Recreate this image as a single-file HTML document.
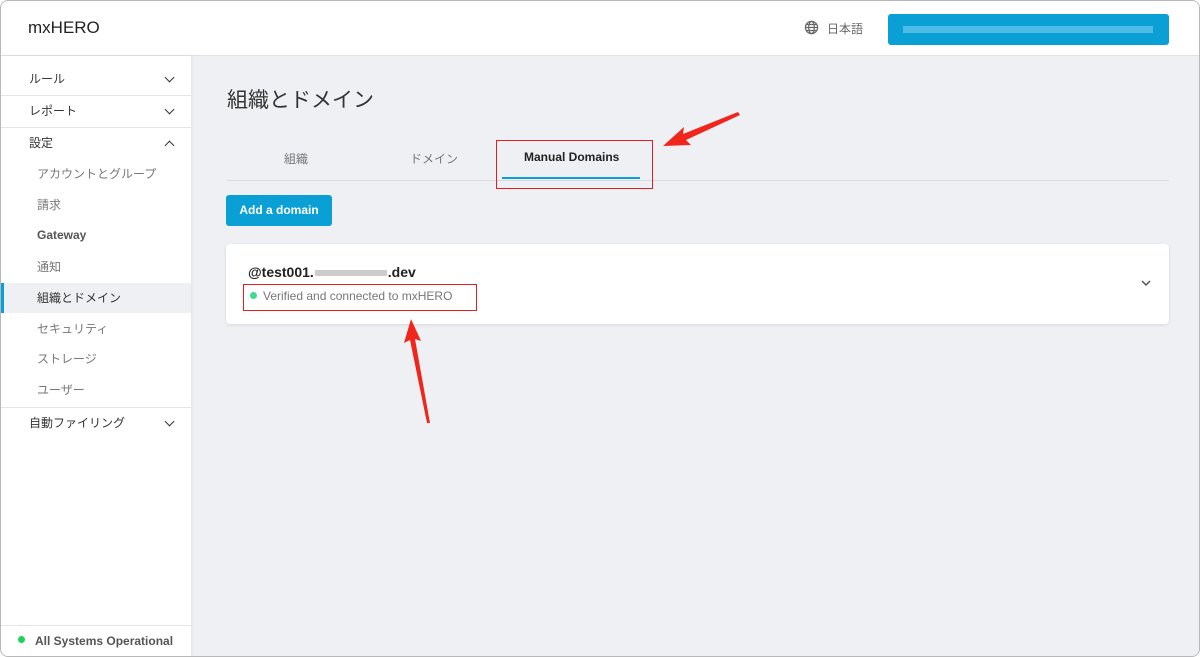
<!DOCTYPE html>
<html><head><meta charset="utf-8"><style>
*{box-sizing:border-box;margin:0;padding:0}
body{width:1200px;height:657px;overflow:hidden;background:#fff;font-family:"Liberation Sans","Noto Sans CJK JP",sans-serif;position:relative}
.frame{position:absolute;inset:0;border:1px solid #b8b8b8;border-radius:8px;overflow:hidden;background:#eef0f3}
.hdr{position:absolute;left:0;top:0;width:1200px;height:55px;background:#fff;border-bottom:1px solid #dfe1e4}
.logo{position:absolute;left:27px;top:17px;font-size:17px;color:#222}
.lang{position:absolute;left:803px;top:19px;font-size:12px;color:#666}
.btn-top{position:absolute;left:887px;top:13px;width:281px;height:31px;background:#0aa0d6;border-radius:3px}
.btn-top i{position:absolute;left:15px;top:12px;width:250px;height:7px;background:#5cc3ea;opacity:.8}
.side{position:absolute;left:0;top:55px;width:190px;height:602px;background:#fff;box-shadow:1px 0 3px rgba(0,0,0,.06)}
.sec{position:absolute;left:0;width:190px;height:32px;border-bottom:1px solid #e3e5e8;font-size:12px;color:#333;padding:9px 0 0 28px;line-height:12px}
.chev{position:absolute;right:18px;top:10px;width:7px;height:7px;border-right:1.6px solid #333;border-bottom:1.6px solid #333;transform:rotate(45deg)}
.chev.up{transform:rotate(-135deg);top:14px}
.item{position:absolute;left:36px;font-size:12px;color:#777}
.active{position:absolute;left:0;top:227px;width:190px;height:30px;background:#eef0f3;border-left:3px solid #0aa0d6}
.status{position:absolute;left:0;top:569px;width:190px;border-top:1px solid #e3e5e8;height:33px}
.status span{position:absolute;left:34px;top:8px;font-size:12px;font-weight:bold;color:#555}
.status b{position:absolute;left:17px;top:10px;width:7px;height:7px;border-radius:50%;background:#1dd35a}
h1{position:absolute;left:226px;top:83px;font-size:21px;font-weight:normal;color:#333}
.tabline{position:absolute;left:226px;top:179px;width:942px;height:1px;background:#d8dadd}
.tab{position:absolute;top:149px;font-size:12px;color:#777}
.ul{position:absolute;left:501px;top:176px;width:138px;height:2px;background:#0aa0d6}
.add{position:absolute;left:225px;top:194px;width:106px;height:31px;background:#0aa0d6;border-radius:3px;color:#fff;font-size:12px;font-weight:bold;text-align:center;line-height:31px}
.card{position:absolute;left:225px;top:243px;width:943px;height:80px;background:#fff;border-radius:4px;box-shadow:0 1px 3px rgba(0,0,0,.1)}
.dom{position:absolute;left:22px;top:20px;font-size:14px;font-weight:bold;color:#222}
.blur{display:inline-block;width:72px;height:6px;background:#aaa;opacity:.6;vertical-align:middle;margin:0 1px}
.ver{position:absolute;left:37px;top:45px;font-size:12px;color:#777}
.dot{position:absolute;left:24px;top:48px;width:7px;height:7px;border-radius:50%;background:#3ddc8f}
.rbox{position:absolute;border:1.5px solid #e02020}
</style></head><body><div class="frame">
<div class="hdr">
<div class="logo">mxHERO</div>
<svg style="position:absolute;left:803px;top:19px" width="15" height="15" viewBox="0 0 16 16" fill="none" stroke="#666" stroke-width="1.3"><circle cx="8" cy="8" r="6.5"/><ellipse cx="8" cy="8" rx="3" ry="6.5"/><path d="M1.5 8h13M2.5 4.8h11M2.5 11.2h11"/></svg>
<div class="lang" style="left:826px">日本語</div>
<div class="btn-top"><i></i></div>
</div>
<div class="side">
<div class="sec" style="top:8px">ルール<span class="chev"></span></div>
<div class="sec" style="top:40px">レポート<span class="chev"></span></div>
<div class="sec" style="top:72px;border:none">設定<span class="chev up"></span></div>
<div class="item" style="top:109px">アカウントとグループ</div>
<div class="item" style="top:140px">請求</div>
<div class="item" style="top:172px;font-weight:bold;color:#555">Gateway</div>
<div class="item" style="top:202px">通知</div>
<div class="active"></div>
<div class="item" style="top:233px;color:#333">組織とドメイン</div>
<div class="item" style="top:264px">セキュリティ</div>
<div class="item" style="top:294px">ストレージ</div>
<div class="item" style="top:325px">ユーザー</div>
<div class="sec" style="top:351px;border-top:1px solid #e3e5e8;border-bottom:none">自動ファイリング<span class="chev"></span></div>
<div class="status"><b></b><span>All Systems Operational</span></div>
</div>
<h1>組織とドメイン</h1>
<div class="tab" style="left:283px">組織</div>
<div class="tab" style="left:409px">ドメイン</div>
<div class="tab" style="left:523px;color:#222;font-weight:bold">Manual Domains</div>
<div class="tabline"></div><div class="ul"></div>
<div class="rbox" style="left:495px;top:139px;width:157px;height:49px"></div>
<div class="add">Add a domain</div>
<div class="card">
<div class="dom">@test001.<span class="blur"></span>.dev</div>
<div class="dot"></div><div class="ver">Verified and connected to mxHERO</div>
<svg style="position:absolute;left:914px;top:35px" width="12" height="8" viewBox="0 0 12 8"><path d="M2 2l4 4 4-4" stroke="#555" stroke-width="1.5" fill="none"/></svg>
</div>
<div class="rbox" style="left:242px;top:283px;width:234px;height:27px"></div>
<svg style="position:absolute;left:0;top:0" width="1200" height="657"><polygon points="662,145 683,126 682,133 737,111 739,114 685,139 690,144" fill="#f0261c"/><polygon points="410,318 420,340 414,338 429,422 426,422 409,339 403,342" fill="#f0261c"/></svg>
</div></body></html>
